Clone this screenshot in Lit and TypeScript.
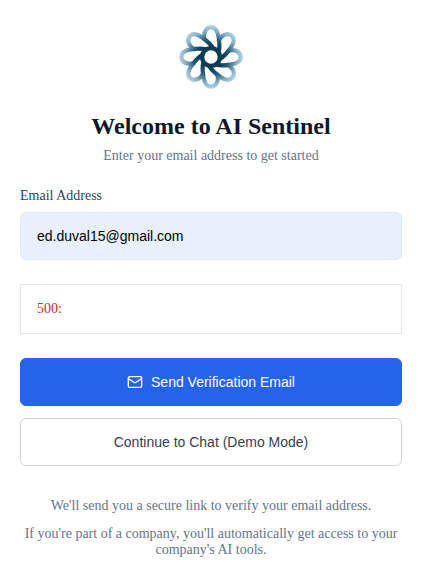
import { LitElement, html, css, svg } from "lit";
import { customElement, state } from "lit/decorators.js";

const PETALS = [0, 45, 90, 135, 180, 225, 270, 315];

@customElement("sentinel-logo")
export class SentinelLogo extends LitElement {
  static styles = css`
    :host {
      display: block;
    }
    .mark {
      display: block;
      width: 64px;
      height: 64px;
    }
  `;

  render() {
    return html`
      <svg class="mark" viewBox="-32 -32 64 64" fill="none" role="img" aria-label="AI Sentinel">
        <defs>
          <radialGradient id="fade" gradientUnits="userSpaceOnUse" cx="0" cy="0" r="32">
            <stop offset="0.38" stop-color="#0b3c55" />
            <stop offset="0.58" stop-color="#2a607b" />
            <stop offset="0.8" stop-color="#80abc3" />
            <stop offset="1" stop-color="#b8d9ea" />
          </radialGradient>
        </defs>
        <g stroke="url(#fade)" stroke-width="4.2">
          ${PETALS.map(
            (angle) => svg`<path
              transform=${`rotate(${angle})`}
              d="M7.5 -5C9 -9 8.6 -14 7.6 -20C6.6 -26 4 -29.8 0 -29.8C-4 -29.8 -7 -26 -6.9 -21C-6.8 -19 -6.4 -17.5 -5.8 -16.5"
            />`
          )}
        </g>
        <circle r="8.9" stroke="#0b3c55" stroke-width="4.4" />
      </svg>
    `;
  }
}

@customElement("app-root")
export class AppRoot extends LitElement {
  static styles = css`
    :host {
      display: block;
      font-family: "Liberation Serif", "Times New Roman", serif;
      font-size: 14px;
      line-height: 16px;
      color: #64748b;
    }
    * {
      box-sizing: border-box;
    }
    .page {
      display: flex;
      flex-direction: column;
      gap: 24px;
      padding: 25px 30px 24px 20px;
    }
    .intro {
      display: flex;
      flex-direction: column;
      align-items: center;
      text-align: center;
    }
    .title {
      margin: 24px 0 8px;
      font-size: 24px;
      line-height: 27px;
      font-weight: 700;
      color: #0f172a;
    }
    .text {
      margin: 0;
    }
    .form {
      display: flex;
      flex-direction: column;
      gap: 24px;
    }
    .field {
      display: flex;
      flex-direction: column;
      gap: 8px;
    }
    .label {
      color: #334155;
    }
    .input,
    .button {
      width: 100%;
      height: 48px;
      padding: 0 16px;
      border: 1px solid #e2e8f0;
      border-radius: 6px;
      font-family: "Liberation Sans", Arial, sans-serif;
      font-size: 14px;
    }
    .input {
      background: #e8f0fe;
      color: #000;
    }
    .alert {
      padding: 16px;
      border: 1px solid #e2e8f0;
      color: #dc2626;
    }
    .actions {
      display: flex;
      flex-direction: column;
      gap: 12px;
    }
    .button {
      display: flex;
      align-items: center;
      justify-content: center;
      gap: 8px;
      cursor: pointer;
    }
    .primary {
      border-color: #2563eb;
      background: #2563eb;
      color: #fff;
    }
    .secondary {
      border-color: #d1d5db;
      background: #fff;
      color: #374151;
    }
    .icon {
      width: 16px;
      height: 16px;
    }
    .notes {
      display: flex;
      flex-direction: column;
      gap: 12px;
      padding-top: 8px;
      text-align: center;
    }
  `;

  @state() private email = "ed.duval15@gmail.com";
  @state() private error = "500:";

  private onInput(e: Event) {
    this.email = (e.target as HTMLInputElement).value;
  }

  render() {
    return html`
      <main class="page">
        <header class="intro">
          <sentinel-logo></sentinel-logo>
          <h1 class="title">Welcome to AI Sentinel</h1>
          <p class="text">Enter your email address to get started</p>
        </header>
        <form class="form" @submit=${(e: Event) => e.preventDefault()}>
          <div class="field">
            <label class="label" for="email">Email Address</label>
            <input
              class="input"
              id="email"
              type="email"
              .value=${this.email}
              @input=${this.onInput}
            />
          </div>
          <div class="alert" role="alert">${this.error}</div>
          <div class="actions">
            <button class="button primary" type="submit">
              <svg
                class="icon"
                viewBox="0 0 24 24"
                fill="none"
                stroke="currentColor"
                stroke-width="2"
                stroke-linecap="round"
                stroke-linejoin="round"
                aria-hidden="true"
              >
                <rect x="2" y="4" width="20" height="16" rx="2" />
                <path d="m22 7-8.97 5.7a1.94 1.94 0 0 1-2.06 0L2 7" />
              </svg>
              Send Verification Email
            </button>
            <button class="button secondary" type="button">Continue to Chat (Demo Mode)</button>
          </div>
        </form>
        <footer class="notes">
          <p class="text">We'll send you a secure link to verify your email address.</p>
          <p class="text">
            If you're part of a company, you'll automatically get access to your company's AI tools.
          </p>
        </footer>
      </main>
    `;
  }
}
